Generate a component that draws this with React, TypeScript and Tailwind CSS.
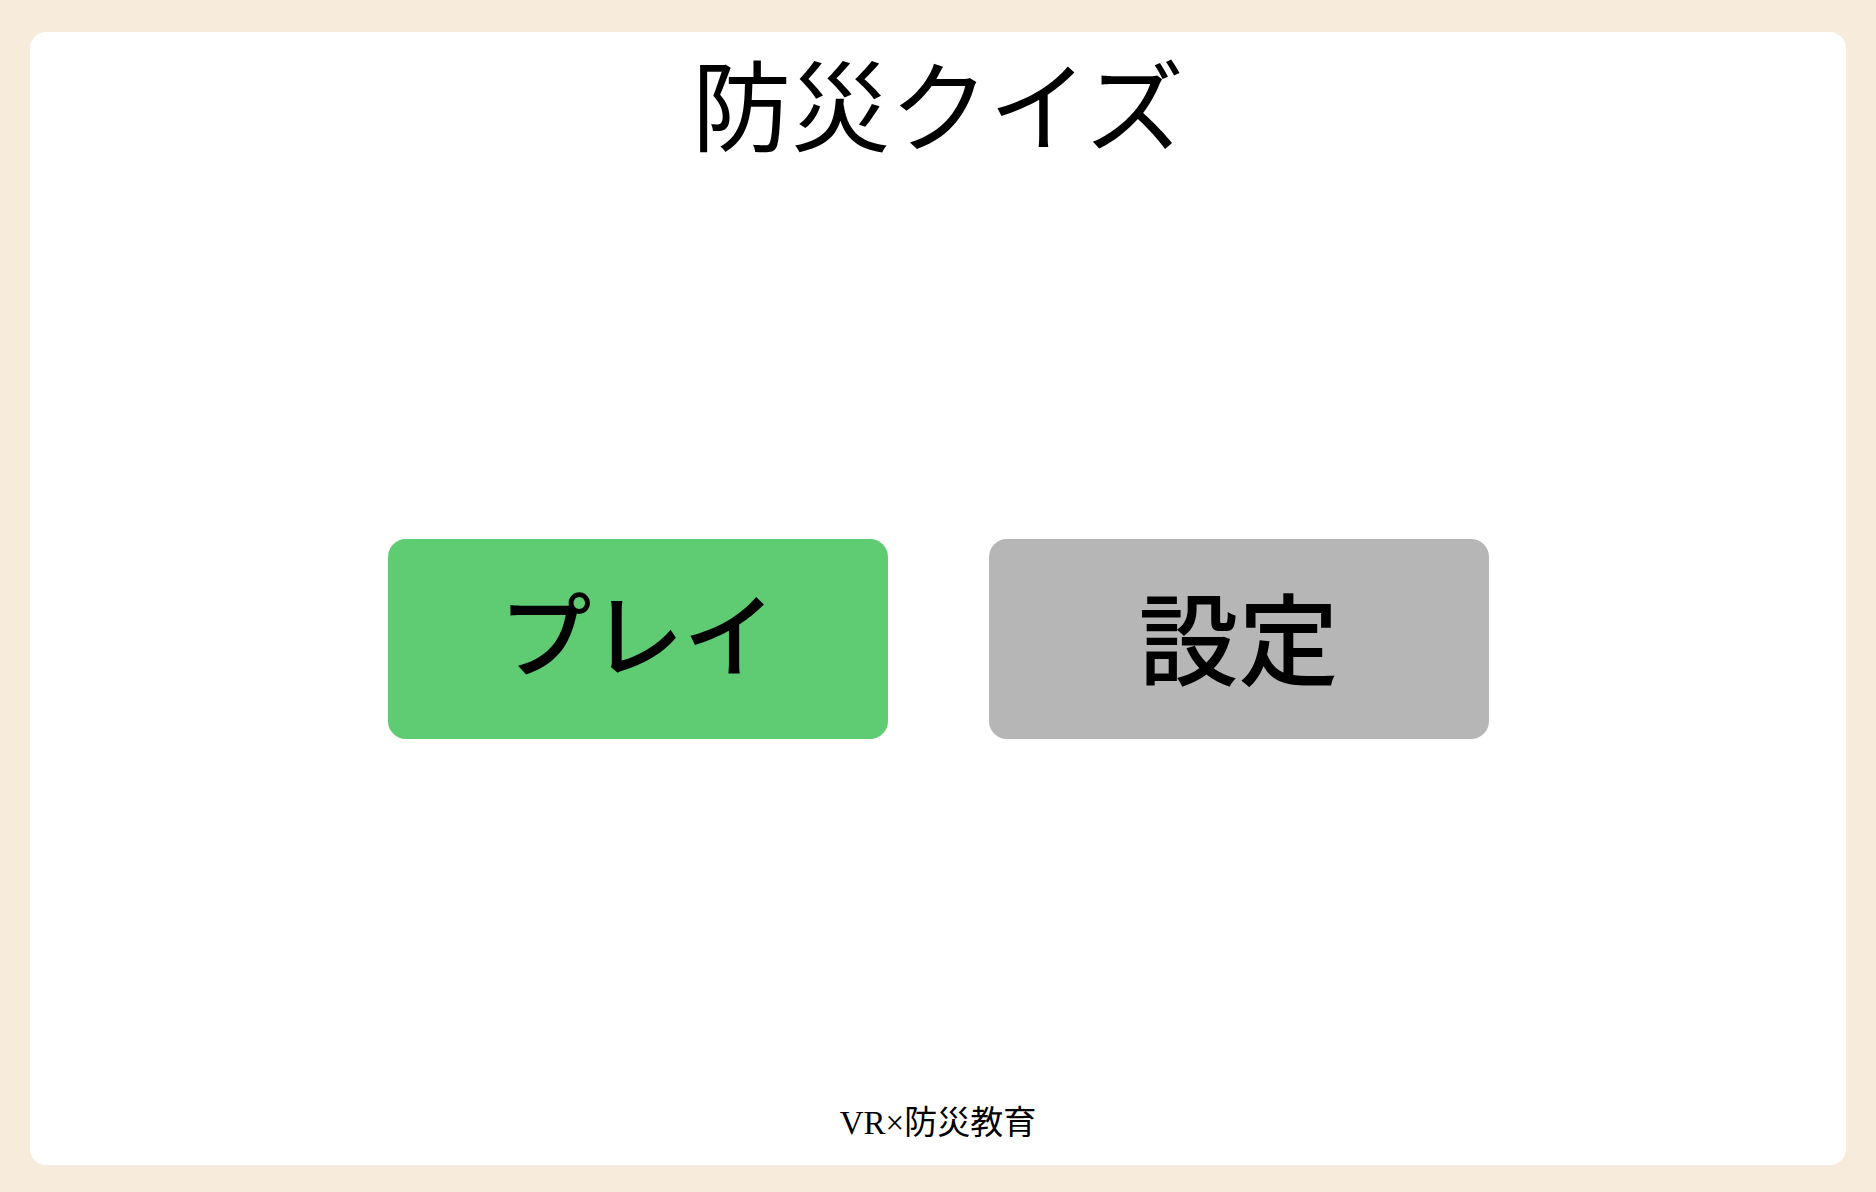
export default function App() {
  return (
    <div className="h-screen w-full bg-[#f7ecdb] px-[30px] pt-[32px] pb-[27px]">
      <div className="flex h-full flex-col items-center rounded-2xl bg-white">
        {/* Title */}
        <h1 className="mt-[20px] text-[99px] leading-[1.2] text-black [font-family:'Liberation_Serif','Noto_Sans_CJK_JP',serif]">
          防災クイズ
        </h1>

        {/* Menu buttons */}
        <div className="flex flex-1 items-center justify-center gap-[101px] pt-[4px]">
          <button
            type="button"
            className="flex h-[200px] w-[500px] items-center justify-center rounded-[18px] bg-[#5fcb73] pb-[18px] text-[92px] font-medium text-black [font-family:'Noto_Sans_CJK_JP',sans-serif]"
          >
            プレイ
          </button>
          <button
            type="button"
            className="flex h-[200px] w-[500px] items-center justify-center rounded-[18px] bg-[#b6b6b6] pb-[8px] text-[100px] font-medium text-black [font-family:'Noto_Sans_CJK_JP',sans-serif]"
          >
            設定
          </button>
        </div>

        {/* Footer */}
        <p className="mb-[21px] text-[33px] leading-tight text-black [font-family:'Liberation_Serif','Noto_Sans_CJK_JP',serif]">
          VR×防災教育
        </p>
      </div>
    </div>
  );
}
